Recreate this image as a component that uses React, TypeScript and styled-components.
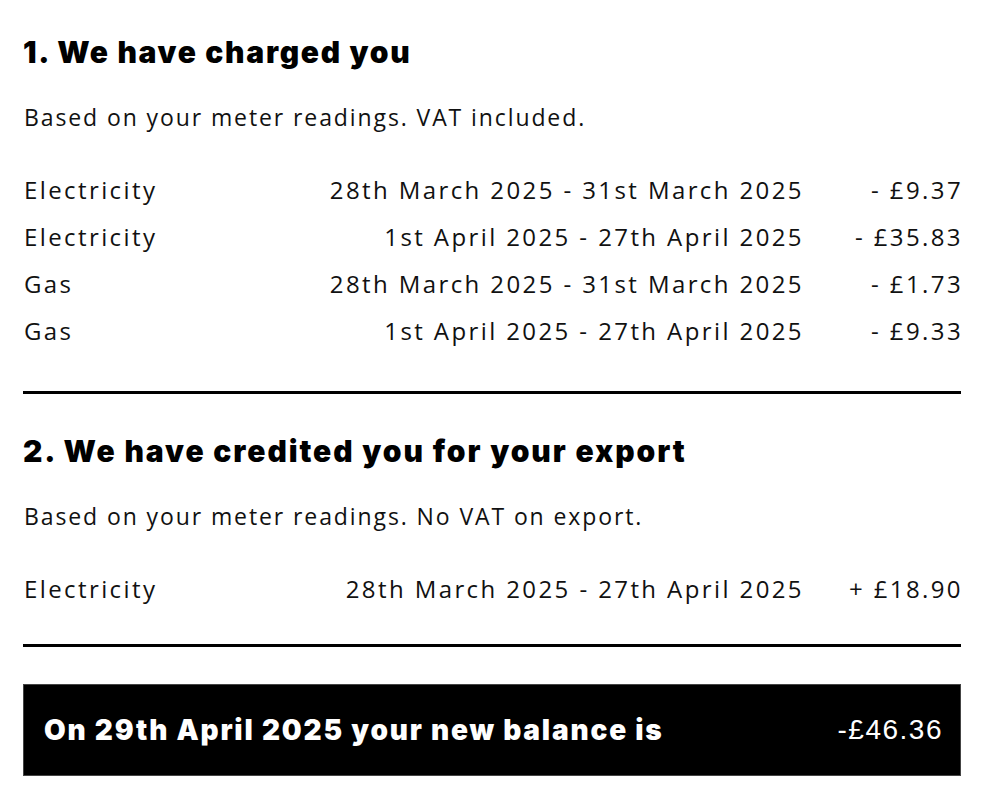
import React from 'react';
import styled, { createGlobalStyle } from 'styled-components';

const GlobalStyle = createGlobalStyle`
  body {
    margin: 0;
    background: #fff;
    color: #111;
    font-family: "Open Sans", "Liberation Sans", sans-serif;
  }
`;

const Page = styled.div`
  width: 938px;
  padding: 32px 0 20px 23px;
`;

const Heading = styled.h2<{ $spacing?: number }>`
  margin: 0;
  height: 40px;
  line-height: 40px;
  font-family: Inter, "Liberation Sans", sans-serif;
  font-weight: 900;
  font-size: 30px;
  letter-spacing: ${p => p.$spacing ?? 1.8}px;
  color: #000;
`;

const Note = styled.p`
  margin: 30px 0 0 1px;
  height: 30px;
  line-height: 30px;
  font-size: 23px;
  letter-spacing: 1.9px;
  font-weight: 400;
`;

const Rows = styled.div<{ $bottom: number }>`
  margin: 34px 0 ${p => p.$bottom}px 1px;
  display: flex;
  flex-direction: column;
`;

const Row = styled.div`
  display: grid;
  grid-template-columns: 1fr auto 159px;
  height: 47px;
  line-height: 47px;
  font-size: 24px;
  letter-spacing: 2.4px;
`;

const Right = styled.span`
  text-align: right;
  white-space: nowrap;
  margin-right: -2px;
`;

const Divider = styled.hr`
  margin: 0 0 37px;
  border: none;
  height: 3px;
  background: #000;
`;

const Balance = styled.div`
  height: 92px;
  display: flex;
  align-items: center;
  justify-content: space-between;
  padding: 0 17px 0 20px;
  background: #000;
  border: 1px solid #444;
  box-sizing: border-box;
  color: #fff;
`;

const BalanceLabel = styled.span`
  font-family: Inter, "Liberation Sans", sans-serif;
  font-weight: 900;
  font-size: 28px;
  letter-spacing: 1.8px;
`;

const BalanceAmount = styled.span`
  font-family: "Liberation Sans", Arial, sans-serif;
  font-size: 28px;
  letter-spacing: 1.5px;
`;

type Line = { kind: string; period: string; amount: string };

const charges: Line[] = [
  { kind: 'Electricity', period: '28th March 2025 - 31st March 2025', amount: '- £9.37' },
  { kind: 'Electricity', period: '1st April 2025 - 27th April 2025', amount: '- £35.83' },
  { kind: 'Gas', period: '28th March 2025 - 31st March 2025', amount: '- £1.73' },
  { kind: 'Gas', period: '1st April 2025 - 27th April 2025', amount: '- £9.33' },
];

const credits: Line[] = [
  { kind: 'Electricity', period: '28th March 2025 - 27th April 2025', amount: '+ £18.90' },
];

const LineList = ({ items, bottom }: { items: Line[]; bottom: number }) => (
  <Rows $bottom={bottom}>
    {items.map((l, i) => (
      <Row key={i}>
        <span>{l.kind}</span>
        <Right>{l.period}</Right>
        <Right>{l.amount}</Right>
      </Row>
    ))}
  </Rows>
);

export default function App() {
  return (
    <>
      <GlobalStyle />
      <Page>
        <Heading $spacing={1.7}>1. We have charged you</Heading>
        <Note>Based on your meter readings. VAT included.</Note>
        <LineList items={charges} bottom={37} />
        <Divider />

        <Heading $spacing={1.9}>2. We have credited you for your export</Heading>
        <Note>Based on your meter readings. No VAT on export.</Note>
        <LineList items={credits} bottom={32} />
        <Divider />

        <Balance>
          <BalanceLabel>On 29th April 2025 your new balance is</BalanceLabel>
          <BalanceAmount>-£46.36</BalanceAmount>
        </Balance>
      </Page>
    </>
  );
}
